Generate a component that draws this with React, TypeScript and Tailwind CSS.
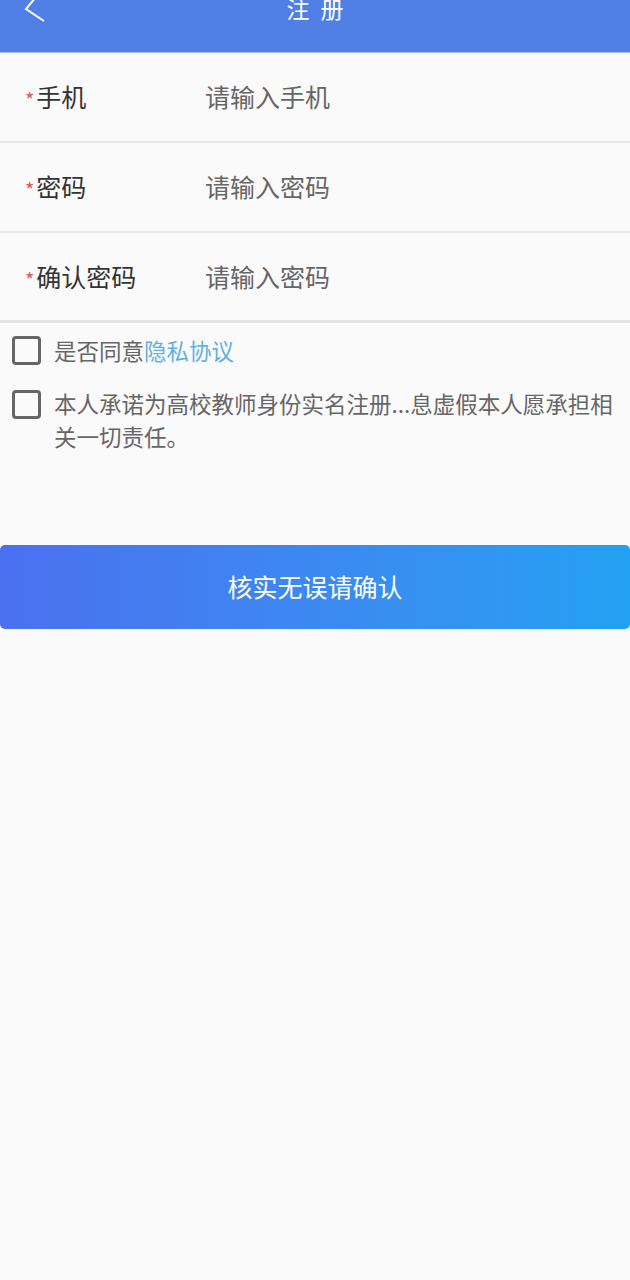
import React from 'react';

const font = { fontFamily: '"Noto Sans CJK SC", "Noto Sans", sans-serif' };

interface FieldRowProps {
  label: string;
  placeholder: string;
  last?: boolean;
}

const FieldRow = ({ label, placeholder, last }: FieldRowProps) => (
  <div
    className={`flex items-center h-[90px] pl-[25px] ${
      last ? 'border-b-[3px] border-[#e4e4e4]' : 'border-b-2 border-[#e8e8e8]'
    }`}
  >
    <div className="w-[180px] flex items-center text-[25px] text-[#333]">
      <span className="text-[#e05555] text-[20px] leading-none mr-[2px] mt-[6px]">*</span>
      {label}
    </div>
    <div className="text-[25px] text-[#666]">{placeholder}</div>
  </div>
);

const Box = () => (
  <div className="w-[29px] h-[29px] shrink-0 rounded-[4px] border-[3px] border-[#666]" />
);

export default function App() {
  return (
    <div className="min-h-[1280px] bg-[#fafafa]" style={font}>
      <div className="h-[53px] bg-[#5080e5] border-b border-[#a9c0ef] overflow-hidden">
        <div className="relative h-[36px] -mt-[10px] flex items-center justify-center">
          <svg
            className="absolute left-[22px] top-0"
            width="26"
            height="44"
            viewBox="0 0 26 44"
            fill="none"
            stroke="white"
            strokeWidth="2"
          >
            <path d="M18 2 L4 19 L22 31" />
          </svg>
          <span className="text-white text-[23px] tracking-[3px] pl-[3px]">注 册</span>
        </div>
      </div>

      <FieldRow label="手机" placeholder="请输入手机" />
      <FieldRow label="密码" placeholder="请输入密码" />
      <FieldRow label="确认密码" placeholder="请输入密码" last />

      <div className="pl-[12px] pr-[8px] pt-[11px]">
        <div className="flex items-center gap-[13px]">
          <Box />
          <div className="text-[22.5px] text-[#666]">
            是否同意<span className="text-[#62b0e0]">隐私协议</span>
          </div>
        </div>
        <div className="flex items-start gap-[13px] mt-[19px]">
          <div className="mt-[3px]">
            <Box />
          </div>
          <div className="text-[22.5px] leading-[33px] text-[#666]">
            本人承诺为高校教师身份实名注册...息虚假本人愿承担相关一切责任。
          </div>
        </div>
      </div>

      <div className="mt-[92px]">
        <button className="w-full h-[84px] rounded-[5px] bg-gradient-to-r from-[#4a70f0] to-[#22a0f2] text-white text-[25px]">
          核实无误请确认
        </button>
      </div>
    </div>
  );
}
